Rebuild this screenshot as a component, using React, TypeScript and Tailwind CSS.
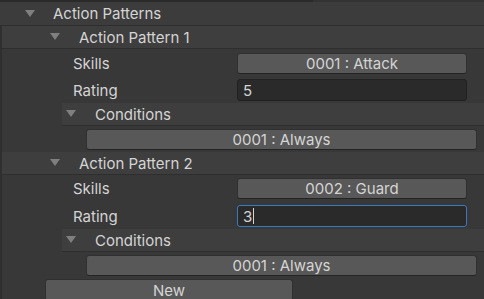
import React from "react";

const Tri = () => (
  <svg width="10" height="8" viewBox="0 0 10 8" className="shrink-0">
    <polygon points="0,0 10,0 5,7" fill="#7f7f7f" />
  </svg>
);

const Btn = ({ children, className = "" }: { children: React.ReactNode; className?: string }) => (
  <div
    className={
      "h-[21px] flex items-center justify-center rounded-[3px] bg-[#585858] border border-[#303030] border-b-[#242424] text-[#d4d4d4] " +
      className
    }
  >
    {children}
  </div>
);

const Field = ({ value, focused = false }: { value: string; focused?: boolean }) => (
  <div
    className={
      "h-[22px] w-[230px] flex items-center rounded-[3px] bg-[#2a2a2a] pl-[5px] text-[#d4d4d4] border " +
      (focused ? "border-[#3a79bb]" : "border-[#212121]")
    }
  >
    <span>{value}</span>
    {focused && <span className="ml-[1px] w-[1px] h-[16px] bg-[#d4d4d4]" />}
  </div>
);

const Pattern = ({
  n,
  skill,
  rating,
  focused,
  first,
}: {
  n: number;
  skill: string;
  rating: string;
  focused?: boolean;
  first?: boolean;
}) => (
  <>
    <div
      className={
        "ml-[2px] h-[23px] flex items-center bg-[#3e3e3e] border-b border-[#2e2e2e] " +
        (first ? "" : "mt-[2px]")
      }
    >
      <div className="ml-[48px]">
        <Tri />
      </div>
      <span className="ml-[19px]">Action Pattern {n}</span>
    </div>
    <div className={"flex items-center h-[21px] " + (first ? "mt-[4px]" : "mt-[3px]")}>
      <span className="ml-[73px] w-[164px]">Skills</span>
      <Btn className="w-[230px]">{skill}</Btn>
    </div>
    <div className={"flex items-center h-[22px] " + (first ? "mt-[5px]" : "mt-[6px]")}>
      <span className="ml-[73px] w-[164px]">Rating</span>
      <Field value={rating} focused={focused} />
    </div>
    <div className="ml-[62px] mt-[2px] h-[23px] flex items-center bg-[#3e3e3e] border-b border-[#2e2e2e]">
      <div className="ml-[4px]">
        <Tri />
      </div>
      <span className="ml-[19px]">Conditions</span>
    </div>
    <div className="mt-[3px] flex">
      <Btn className="ml-[86px] w-[391px]">0001 : Always</Btn>
    </div>
  </>
);

export default function App() {
  return (
    <div
      className="w-[484px] h-[299px] overflow-hidden bg-[#383838] text-[15px] text-[#d4d4d4] leading-none"
      style={{ fontFamily: "Inter, 'Noto Sans', sans-serif" }}
    >
      <div className="h-[2px] flex">
        <div className="w-[313px] bg-[#2a2a2a]" />
        <div className="flex-1 bg-[#333333]" />
      </div>
      <div className="h-[24px] flex items-center bg-[#3c3c3c] border-b border-[#2e2e2e]">
        <div className="ml-[25px]">
          <Tri />
        </div>
        <span className="ml-[18px]">Action Patterns</span>
      </div>
      <div className="flex">
        <div className="w-[2px] bg-[#2f2f2f]" />
        <div className="flex-1 flex flex-col -ml-[2px]">
          <Pattern n={1} skill="0001 : Attack" rating="5" first />
          <Pattern n={2} skill="0002 : Guard" rating="3" focused />
          <div className="mt-[3px] flex">
            <Btn className="ml-[45px] w-[248px] h-[22px]">New</Btn>
          </div>
        </div>
      </div>
    </div>
  );
}
